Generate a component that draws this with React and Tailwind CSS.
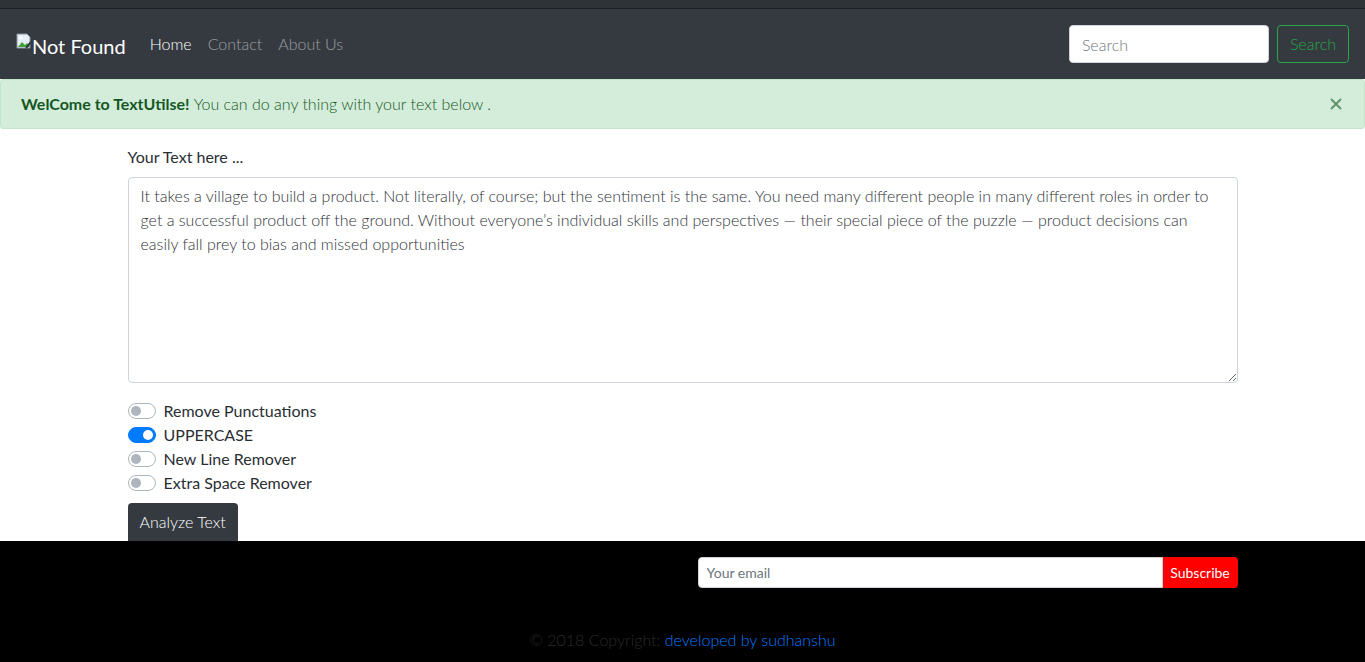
import { useState } from 'react'

const SAMPLE =
  'It takes a village to build a product. Not literally, of course; but the sentiment is the same. You need many different people in many different roles in order to get a successful product off the ground. Without everyone\u2019s individual skills and perspectives \u2014 their special piece of the puzzle \u2014 product decisions can easily fall prey to bias and missed opportunities'

const OPTIONS = [
  ['punct', 'Remove Punctuations'],
  ['upper', 'UPPERCASE'],
  ['newline', 'New Line Remover'],
  ['space', 'Extra Space Remover'],
]

function BrokenImage() {
  return (
    <svg width="16" height="16" viewBox="0 0 16 16" className="inline-block align-top mt-[2px]">
      <path d="M1 1h10l3 3v11H1z" fill="#e8eef5" stroke="#8a96a3" strokeWidth="1" />
      <path d="M2 14l4-5 3 3 2-2 3 4z" fill="#3fa33a" />
      <circle cx="5" cy="5" r="1.6" fill="#ffffff" />
      <path d="M10 15l5-6" stroke="#343a40" strokeWidth="2" />
    </svg>
  )
}

function Switch({ on, onClick }) {
  return (
    <button
      onClick={onClick}
      className={`relative w-7 h-4 rounded-full border flex-shrink-0 ${
        on ? 'bg-[#007bff] border-[#007bff]' : 'bg-white border-[#adb5bd]'
      }`}
    >
      <span
        className={`absolute top-[2px] w-[10px] h-[10px] rounded-full ${
          on ? 'left-[14px] bg-white' : 'left-[2px] bg-[#adb5bd]'
        }`}
      />
    </button>
  )
}

export default function App() {
  const [text, setText] = useState(SAMPLE)
  const [alertOpen, setAlertOpen] = useState(true)
  const [opts, setOpts] = useState({ punct: false, upper: true, newline: false, space: false })

  return (
    <div className="min-h-[662px] flex flex-col bg-white text-[#212529] font-['Lato','Open_Sans',sans-serif]">
      {/* Top strip */}
      <div className="h-[9px] bg-[#2e3338] border-b border-[#1e2124]" />

      {/* Navbar */}
      <nav className="h-[70px] bg-[#343a40] flex items-center px-4">
        <a className="text-white text-[20px] mr-6 flex items-start pt-1">
          <BrokenImage />
          <span>Not Found</span>
        </a>
        <div className="flex items-center gap-4 text-[16px] font-light">
          <a className="text-white">Home</a>
          <a className="text-white/50">Contact</a>
          <a className="text-white/50">About Us</a>
        </div>
        <div className="ml-auto flex items-center gap-2 font-light">
          <input
            placeholder="Search"
            className="w-[200px] h-[38px] rounded bg-white px-3 text-[16px] text-[#495057] placeholder-[#6c757d] border border-[#ced4da] outline-none"
          />
          <button className="h-[38px] px-3 rounded border border-[#28a745] text-[#28a745] text-[16px]">
            Search
          </button>
        </div>
      </nav>

      {/* Alert */}
      {alertOpen && (
        <div className="h-[50px] bg-[#d4edda] border border-[#c3e6cb] rounded-[3px] text-[#155724] flex items-center px-5 text-[16px]">
          <span>
            <strong className="font-bold">WelCome to TextUtilse!</strong>{' '}
            <span className="font-light">You can do any thing with your text below .</span>
          </span>
          <button onClick={() => setAlertOpen(false)} className="ml-auto mr-[2px] text-[#155724]/60">
            <svg width="12" height="12" viewBox="0 0 12 12">
              <path d="M1 1l10 10M11 1L1 11" stroke="currentColor" strokeWidth="2" />
            </svg>
          </button>
        </div>
      )}

      {/* Main */}
      <main className="w-[1110px] mx-auto pt-4">
        <label className="block text-[16px] mb-2 text-[#2a2e33]">Your Text here ...</label>
        <textarea
          value={text}
          onChange={(e) => setText(e.target.value)}
          className="block w-full h-[206px] border border-[#ced4da] rounded px-3 py-[6px] text-[16px] leading-6 font-light text-[#2f3439] outline-none"
        />
        <div className="mt-4 flex flex-col">
          {OPTIONS.map(([key, label]) => (
            <div key={key} className="flex items-center gap-2 h-6">
              <Switch on={opts[key]} onClick={() => setOpts((p) => ({ ...p, [key]: !p[key] }))} />
              <span className="text-[16px] text-[#2a2e33]">{label}</span>
            </div>
          ))}
        </div>
        <button className="mt-2 h-[38px] px-3 rounded rounded-b-none bg-[#343a40] text-white text-[16px] font-light">
          Analyze Text
        </button>
      </main>

      {/* Footer */}
      <footer className="flex-1 bg-black flex flex-col">
        <div className="w-[1110px] mx-auto flex justify-end pt-4">
          <div className="flex w-[540px] h-[31px]">
            <input
              placeholder="Your email"
              className="flex-1 bg-white rounded-l border border-[#ced4da] px-2 text-[14px] text-[#495057] placeholder-[#6c757d] outline-none"
            />
            <button className="w-[75px] bg-[#ff0000] text-white text-[14px] rounded-r">Subscribe</button>
          </div>
        </div>
        <div className="text-center text-[16px] mt-10 text-[#2b2b2b] font-light">
          © 2018 Copyright: <a className="text-[#007bff]">developed by sudhanshu</a>
        </div>
      </footer>
    </div>
  )
}
